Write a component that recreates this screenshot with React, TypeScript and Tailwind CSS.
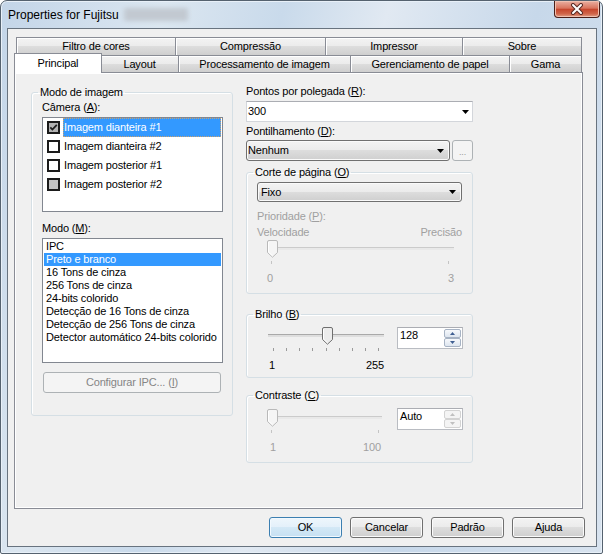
import React from 'react';

const FONT = "font-['Liberation_Sans',Arial,sans-serif]";
const FACE = 'bg-[linear-gradient(to_bottom,#f3f3f3_0%,#ebebeb_50%,#dddddd_50%,#cfcfcf_100%)]';

function Arrow({ color = '#000000' }: { color?: string }) {
  return (
    <svg width="7" height="4" viewBox="0 0 7 4">
      <path d="M0 0h7L3.5 4z" fill={color} />
    </svg>
  );
}

function Check({ state }: { state: 'checked' | 'off' | 'mixed' }) {
  const fill = state === 'checked' ? 'bg-[#b3b3b3]' : state === 'mixed' ? 'bg-[#c3c3c3]' : 'bg-white';
  return (
    <div className={`w-[13px] h-[13px] shrink-0 border-2 border-[#1b1b1b] flex items-center justify-center ${fill}`}>
      {state === 'checked' && (
        <svg width="9" height="9" viewBox="0 0 9 9">
          <path d="M1.3 4.3l2.1 2.2L7.8 1.8" stroke="#1e1e1e" strokeWidth="1.8" fill="none" />
        </svg>
      )}
    </div>
  );
}

function Tab({ label, w, last }: { label: string; w: string; last?: boolean }) {
  return (
    <div
      className={`${w} h-full flex items-center justify-center border-l border-t border-[#898c95] ${
        last ? 'border-r' : ''
      } ${FACE} shadow-[inset_1px_1px_0_#ffffff]`}
    >
      {label}
    </div>
  );
}

function GroupBox({ title, className, children }: { title: React.ReactNode; className?: string; children: React.ReactNode }) {
  return (
    <fieldset className={`border border-[#d5dfe5] rounded-[3px] shadow-[inset_1px_1px_0_#ffffff] ${className ?? ''}`}>
      <legend className="ml-[6px] px-[2px] leading-[13px]">{title}</legend>
      {children}
    </fieldset>
  );
}

function Slider({
  width,
  thumb,
  ticks,
  disabled,
  left,
  right,
  labelPad,
}: {
  width: string;
  thumb: number;
  ticks: number[];
  disabled?: boolean;
  left: string;
  right: string;
  labelPad: string;
}) {
  return (
    <div className={width}>
      <div className="relative h-[24px]">
        {/* channel */}
        <div
          className={`absolute left-[1px] right-0 top-[7px] h-[3px] border-t ${
            disabled ? 'border-[#cbcbcb] bg-[#e9e9e9]' : 'border-[#a9a9a9] bg-[#dedede]'
          }`}
        />
        {ticks.map((t) => (
          <div
            key={t}
            className={`absolute top-[21px] h-[3px] w-px ${disabled ? 'bg-[#c4c4c4]' : 'bg-[#9a9a9a]'}`}
            style={{ left: t }}
          />
        ))}
        <svg className="absolute top-0" style={{ left: thumb }} width="11" height="18" viewBox="0 0 11 18">
          <path
            d="M0.5 2Q0.5 0.5 2 0.5H9Q10.5 0.5 10.5 2V12.5L5.5 17.2L0.5 12.5Z"
            fill={disabled ? '#f5f5f5' : '#ececec'}
            stroke={disabled ? '#b9b9b9' : '#6f6f6f'}
          />
          <path d="M1.5 2V12L5.5 15.8" stroke="#ffffff" fill="none" />
        </svg>
      </div>
      <div className={`mt-[8px] flex justify-between leading-[13px] ${labelPad} ${disabled ? 'text-[#a0a0a0]' : ''}`}>
        <span>{left}</span>
        <span>{right}</span>
      </div>
    </div>
  );
}

function SpinEdit({ value, disabled, className }: { value: string; disabled?: boolean; className: string }) {
  const btn = disabled
    ? 'border-[#d3d3d3] bg-[#f4f4f4]'
    : 'border-[#a7b3c4] bg-[linear-gradient(to_bottom,#f7f9fc,#dde5ef)]';
  const col = disabled ? '#c0c0c0' : '#3e5e92';
  return (
    <div className={`${className} w-[66px] h-[22px] bg-white border border-[#b9bcc2] border-t-[#abadb3] flex`}>
      <div className="flex-1 pl-[2px] pt-px leading-[13px]">{value}</div>
      <div className="w-[17px] mt-px mr-px flex flex-col">
        <div className={`h-[9px] border rounded-[2px] flex items-center justify-center ${btn}`}>
          <svg width="5" height="3" viewBox="0 0 5 3">
            <path d="M0 3h5L2.5 0z" fill={col} />
          </svg>
        </div>
        <div className={`h-[9px] border rounded-[2px] flex items-center justify-center ${btn}`}>
          <svg width="5" height="3" viewBox="0 0 5 3">
            <path d="M0 0h5L2.5 3z" fill={col} />
          </svg>
        </div>
      </div>
    </div>
  );
}

function DialogButton({ label, primary }: { label: string; primary?: boolean }) {
  return (
    <div
      className={`w-[73px] h-[21px] rounded-[3px] border flex items-center justify-center ${
        primary
          ? 'border-[#3c7fb1] bg-[linear-gradient(to_bottom,#eef6fc_0%,#e3f0fa_50%,#d3e8f6_50%,#c6e0f2_100%)] shadow-[inset_0_0_0_1px_#f2f9fe]'
          : `border-[#707070] ${FACE} shadow-[inset_0_0_0_1px_#fbfbfb]`
      }`}
    >
      {label}
    </div>
  );
}

const cameras: { label: string; state: 'checked' | 'off' | 'mixed'; sel?: boolean }[] = [
  { label: 'Imagem dianteira #1', state: 'checked', sel: true },
  { label: 'Imagem dianteira #2', state: 'off' },
  { label: 'Imagem posterior #1', state: 'off' },
  { label: 'Imagem posterior #2', state: 'mixed' },
];

const modes = [
  'IPC',
  'Preto e branco',
  '16 Tons de cinza',
  '256 Tons de cinza',
  '24-bits colorido',
  'Detecção de 16 Tons de cinza',
  'Detecção de 256 Tons de cinza',
  'Detector automático 24-bits colorido',
];

export default function App() {
  return (
    <div className={`w-[603px] h-[554px] ${FONT} text-[11px] tracking-[-0.15px] text-black`}>
      <div className="w-full h-full flex flex-col border border-[#55626f] rounded-t-[7px] rounded-b-[2px] overflow-hidden bg-[linear-gradient(105deg,#c3d5e8_0%,#dbe6f0_22%,#c9daeb_38%,#e1e9f2_52%,#c7d8ea_72%,#d8e3ef_100%)] shadow-[inset_0_0_0_1px_#e8f0f8]">
        {/* Title bar */}
        <div className="h-[27px] shrink-0 flex items-start">
          <div className="h-[27px] flex items-center pl-[7px] text-[12px] tracking-normal">
            Properties for Fujitsu
            <div className="ml-[5px] w-[64px] h-[13px] bg-[#c2c9d1] blur-[2px] rounded-[2px]" />
          </div>
          <div className="ml-auto mr-[2px] w-[46px] h-[17px] rounded-b-[4px] border border-t-0 border-[#4a1e18] bg-[linear-gradient(to_bottom,#eab0a2_0%,#d9745d_45%,#c6462d_52%,#d0654a_80%,#e0a088_100%)] shadow-[inset_0_0_0_1px_#f0c0b0] flex items-center justify-center">
            <svg width="14" height="12" viewBox="0 0 14 12">
              <path d="M3 2L11 10M11 2L3 10" stroke="#5a2a24" strokeWidth="4" strokeLinecap="round" />
              <path d="M3 2L11 10M11 2L3 10" stroke="#ffffff" strokeWidth="2" strokeLinecap="round" />
            </svg>
          </div>
        </div>

        {/* Client area */}
        <div className="ml-[6px] mr-[5px] h-[519px] shrink-0 border border-[#68737f] bg-[#f0f0f0] flex flex-col">
          <div className="ml-[6px] mt-[8px] w-[569px]">
            {/* back row of tabs */}
            <div className="h-[18px] flex pl-[2px]">
              <Tab label="Filtro de cores" w="w-[159px]" />
              <Tab label="Compressão" w="w-[150px]" />
              <Tab label="Impressor" w="w-[137px]" />
              <Tab label="Sobre" w="w-[120px]" last />
            </div>
            {/* front row of tabs */}
            <div className="h-[17px] flex items-end">
              <div className="relative z-10 w-[88px] h-[20px] -mb-px -mr-[2px] border-l border-t border-r border-[#898c95] bg-white flex items-center justify-center">
                Principal
              </div>
              <Tab label="Layout" w="w-[78px]" />
              <Tab label="Processamento de imagem" w="w-[172px]" />
              <Tab label="Gerenciamento de papel" w="w-[159px]" />
              <Tab label="Gama" w="w-[73px]" last />
            </div>

            {/* Tab page */}
            <div className="h-[437px] border border-[#898c95] shadow-[inset_1px_1px_0_#ffffff,inset_-1px_-1px_0_#ffffff] flex items-start pl-[16px] pt-[12px]">
              {/* Left column */}
              <GroupBox title="Modo de imagem" className="mt-px w-[202px]">
                <div className="pl-[10px] pb-[22px]">
                  <div className="mt-[2px] leading-[13px]">
                    Câmera (<u>A</u>):
                  </div>
                  <div className="mt-[3px] w-[181px] h-[95px] border border-[#828790] bg-white">
                    {cameras.map((c) => (
                      <div key={c.label} className="h-[19px] flex items-center pl-[4px]">
                        <Check state={c.state} />
                        <div
                          className={`ml-[3px] mr-px flex-1 h-[19px] flex items-center pl-px leading-[13px] ${
                            c.sel
                              ? 'bg-[#3399ff] text-white outline-1 outline-dotted outline-[#c9a070] -outline-offset-1'
                              : ''
                          }`}
                        >
                          {c.label}
                        </div>
                      </div>
                    ))}
                  </div>

                  <div className="mt-[10px] leading-[13px]">
                    Modo (<u>M</u>):
                  </div>
                  <div className="mt-[3px] w-[181px] h-[125px] border border-[#828790] bg-white pt-px px-px">
                    {modes.map((m, i) => (
                      <div
                        key={m}
                        className={`h-[13px] leading-[13px] pl-[2px] whitespace-nowrap ${
                          i === 1 ? 'bg-[#3399ff] text-white' : ''
                        }`}
                      >
                        {m}
                      </div>
                    ))}
                  </div>

                  <div className="mt-[9px] ml-px w-[178px] h-[21px] border border-[#adb2b5] rounded-[3px] bg-[#f4f4f4] text-[#858585] flex items-center justify-center">
                    <span>
                      Configurar IPC... (<u>I</u>)
                    </span>
                  </div>
                </div>
              </GroupBox>

              {/* Right column */}
              <div className="ml-[13px] w-[227px] flex flex-col">
                <div className="leading-[13px]">
                  Pontos por polegada (<u>R</u>):
                </div>
                <div className="mt-[3px] h-[21px] bg-white border border-[#d3d6db] border-t-[#abadb3] flex items-center pl-px pr-[3px]">
                  <span className="flex-1">300</span>
                  <Arrow />
                </div>

                <div className="mt-[3px] leading-[13px]">
                  Pontilhamento (<u>D</u>):
                </div>
                <div className="mt-[2px] flex items-start gap-[2px]">
                  <div className={`w-[204px] h-[21px] border border-[#707070] rounded-[3px] ${FACE} shadow-[inset_0_0_0_1px_#fafafa] flex items-center pl-px pr-[5px]`}>
                    <span className="flex-1">Nenhum</span>
                    <Arrow />
                  </div>
                  <div className="w-[21px] h-[21px] border border-[#adb2b5] rounded-[3px] bg-[#f4f4f4] text-[#9a9a9a] text-[9px] leading-[9px] flex items-end justify-center pb-[3px]">
                    ...
                  </div>
                </div>

                <GroupBox
                  title={
                    <>
                      Corte de página (<u>O</u>)
                    </>
                  }
                  className="mt-[5px]"
                >
                  <div className="pl-[10px] pr-[10px] pb-[8px]">
                    <div className={`mt-[3px] w-[205px] h-[20px] border border-[#707070] rounded-[3px] ${FACE} shadow-[inset_0_0_0_1px_#fafafa] flex items-center pl-[3px] pr-[5px]`}>
                      <span className="flex-1">Fixo</span>
                      <Arrow />
                    </div>
                    <div className="mt-[8px] leading-[13px] text-[#a0a0a0]">
                      Prioridade (<u>P</u>):
                    </div>
                    <div className="mt-[3px] leading-[13px] text-[#a0a0a0] flex justify-between">
                      <span>Velocidade</span>
                      <span>Precisão</span>
                    </div>
                    <div className="mt-px ml-[10px]">
                      <Slider width="w-[187px]" thumb={0} ticks={[4, 181]} disabled left="0" right="3" labelPad="pr-0" />
                    </div>
                  </div>
                </GroupBox>

                <GroupBox
                  title={
                    <>
                      Brilho (<u>B</u>)
                    </>
                  }
                  className="mt-[14px]"
                >
                  <div className="mt-[6px] pl-[20px] pb-[5px] flex items-start">
                    <Slider
                      width="w-[117px]"
                      thumb={55}
                      ticks={[6, 19, 32, 45, 59, 72, 85, 98, 111]}
                      left="1"
                      right="255"
                      labelPad="pl-[2px]"
                    />
                    <SpinEdit value="128" className="ml-[13px]" />
                  </div>
                </GroupBox>

                <GroupBox
                  title={
                    <>
                      Contraste (<u>C</u>)
                    </>
                  }
                  className="mt-[11px]"
                >
                  <div className="mt-[7px] pl-[20px] pb-[8px] flex items-start">
                    <Slider width="w-[115px]" thumb={0} ticks={[4, 111]} disabled left="1" right="100" labelPad="pl-[3px] pr-[1px]" />
                    <SpinEdit value="Auto" disabled className="ml-[15px] -mt-px" />
                  </div>
                </GroupBox>
              </div>
            </div>
          </div>

          {/* Dialog buttons */}
          <div className="mt-[8px] flex justify-end gap-[8px] pr-[11px]">
            <DialogButton label="OK" primary />
            <DialogButton label="Cancelar" />
            <DialogButton label="Padrão" />
            <DialogButton label="Ajuda" />
          </div>
        </div>
      </div>
    </div>
  );
}
